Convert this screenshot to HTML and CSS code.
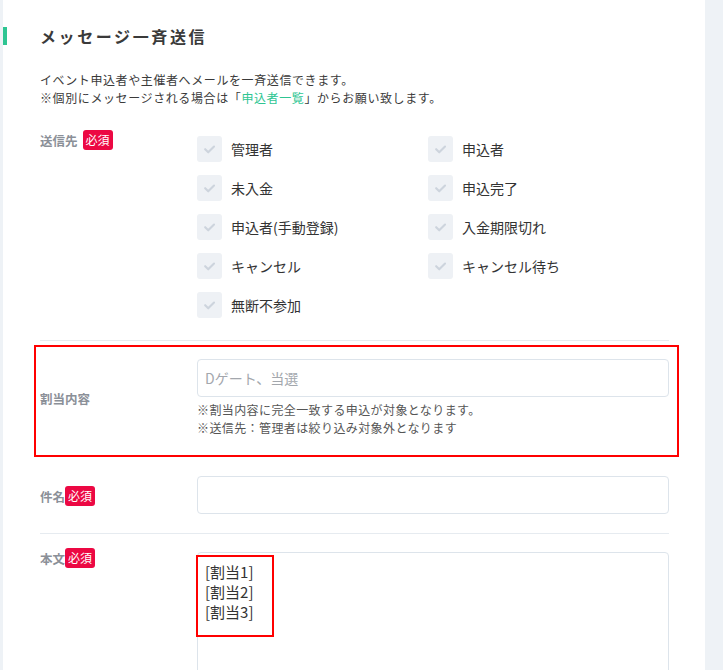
FILE: index.html
```html
<!DOCTYPE html>
<html lang="ja">
<head>
<meta charset="utf-8">
<title>メッセージ一斉送信</title>
<link rel="stylesheet" href="styles.css">
</head>
<body>
<div class="page">
  <main class="panel">
    <h2 class="title">メッセージ一斉送信</h2>
    <p class="desc">イベント申込者や主催者へメールを一斉送信できます。<br>※個別にメッセージされる場合は「<a class="link" href="#">申込者一覧</a>」からお願い致します。</p>

    <section class="row row-dest">
      <div class="label"><span class="label-text gap">送信先</span><span class="badge">必須</span></div>
      <div class="field field-checks">
        <div class="checks">
          <label class="check"><span class="box"><svg viewBox="0 0 26 26" width="26" height="26"><path d="M8.5 13.2l3.2 3.2 6-6" fill="none" stroke="#cdd4dd" stroke-width="2.2" stroke-linecap="round" stroke-linejoin="round"/></svg></span><span class="check-text">管理者</span></label>
          <label class="check"><span class="box"><svg viewBox="0 0 26 26" width="26" height="26"><path d="M8.5 13.2l3.2 3.2 6-6" fill="none" stroke="#cdd4dd" stroke-width="2.2" stroke-linecap="round" stroke-linejoin="round"/></svg></span><span class="check-text">申込者</span></label>
          <label class="check"><span class="box"><svg viewBox="0 0 26 26" width="26" height="26"><path d="M8.5 13.2l3.2 3.2 6-6" fill="none" stroke="#cdd4dd" stroke-width="2.2" stroke-linecap="round" stroke-linejoin="round"/></svg></span><span class="check-text">未入金</span></label>
          <label class="check"><span class="box"><svg viewBox="0 0 26 26" width="26" height="26"><path d="M8.5 13.2l3.2 3.2 6-6" fill="none" stroke="#cdd4dd" stroke-width="2.2" stroke-linecap="round" stroke-linejoin="round"/></svg></span><span class="check-text">申込完了</span></label>
          <label class="check"><span class="box"><svg viewBox="0 0 26 26" width="26" height="26"><path d="M8.5 13.2l3.2 3.2 6-6" fill="none" stroke="#cdd4dd" stroke-width="2.2" stroke-linecap="round" stroke-linejoin="round"/></svg></span><span class="check-text">申込者(手動登録)</span></label>
          <label class="check"><span class="box"><svg viewBox="0 0 26 26" width="26" height="26"><path d="M8.5 13.2l3.2 3.2 6-6" fill="none" stroke="#cdd4dd" stroke-width="2.2" stroke-linecap="round" stroke-linejoin="round"/></svg></span><span class="check-text">入金期限切れ</span></label>
          <label class="check"><span class="box"><svg viewBox="0 0 26 26" width="26" height="26"><path d="M8.5 13.2l3.2 3.2 6-6" fill="none" stroke="#cdd4dd" stroke-width="2.2" stroke-linecap="round" stroke-linejoin="round"/></svg></span><span class="check-text">キャンセル</span></label>
          <label class="check"><span class="box"><svg viewBox="0 0 26 26" width="26" height="26"><path d="M8.5 13.2l3.2 3.2 6-6" fill="none" stroke="#cdd4dd" stroke-width="2.2" stroke-linecap="round" stroke-linejoin="round"/></svg></span><span class="check-text">キャンセル待ち</span></label>
          <label class="check"><span class="box"><svg viewBox="0 0 26 26" width="26" height="26"><path d="M8.5 13.2l3.2 3.2 6-6" fill="none" stroke="#cdd4dd" stroke-width="2.2" stroke-linecap="round" stroke-linejoin="round"/></svg></span><span class="check-text">無断不参加</span></label>
        </div>
      </div>
    </section>

    <section class="annot">
      <div class="row row-assign">
        <div class="label label-center"><span class="label-text">割当内容</span></div>
        <div class="field">
          <div class="input placeholder">Dゲート、当選</div>
          <p class="notes">※割当内容に完全一致する申込が対象となります。<br>※送信先：管理者は絞り込み対象外となります</p>
        </div>
      </div>
    </section>

    <section class="row row-subject">
      <div class="label label-subject"><span class="label-text">件名</span><span class="badge">必須</span></div>
      <div class="field"><div class="input"></div></div>
    </section>

    <section class="row row-body">
      <div class="label label-body"><span class="label-text">本文</span><span class="badge">必須</span></div>
      <div class="field">
        <div class="textarea">
          <div class="body-line">[割当1]</div>
          <div class="body-line">[割当2]</div>
          <div class="body-line">[割当3]</div>
          <span class="mark"></span>
        </div>
      </div>
    </section>
  </main>
</div>
</body>
</html>
```

FILE: styles.css
```css
* { box-sizing: border-box; }

html, body {
  margin: 0;
  padding: 0;
  height: 100%;
}

body {
  background: #eef2f6;
  font-family: "Noto Sans CJK JP", "Noto Sans", sans-serif;
  color: #333;
}

.page {
  padding-left: 3px;
  min-height: 100%;
}

.panel {
  width: 702px;
  min-height: 670px;
  background: #fff;
  padding: 27px 36px 0 0;
}

.title {
  margin: 0;
  border-left: 4px solid #2ec592;
  padding-left: 33px;
  font-size: 16px;
  line-height: 18px;
  font-weight: 700;
  letter-spacing: 2.6px;
  color: #3a3a3a;
}

.desc {
  margin: 26px 0 0 37px;
  font-size: 12px;
  line-height: 18px;
  letter-spacing: 0.6px;
  color: #3a3a3a;
}

.link {
  color: #2ec592;
  text-decoration: none;
}

.row {
  display: grid;
  grid-template-columns: 157px 472px;
  margin-left: 37px;
}

.label {
  display: flex;
  align-items: center;
  height: 20px;
}

.label-text {
  font-size: 12.5px;
  font-weight: 700;
  color: #8b9098;
}

.label-text.gap { margin-right: 5px; }

.badge {
  display: inline-block;
  height: 20px;
  line-height: 20px;
  padding: 0 3px;
  border-radius: 3px;
  background: #ec0843;
  color: #fff;
  font-size: 12px;
}

.row-dest {
  margin-top: 23px;
  padding-bottom: 22px;
  border-bottom: 1px solid #e6ebf0;
}

.field-checks { padding-top: 6px; }

.checks {
  display: grid;
  grid-template-columns: 231px 1fr;
  row-gap: 13px;
}

.check {
  display: flex;
  align-items: center;
  height: 26px;
}

.box {
  width: 25px;
  height: 26px;
  border-radius: 3px;
  background: #eef1f5;
  display: flex;
}

.check-text {
  margin-left: 9px;
  font-size: 14px;
  color: #333;
}

.annot {
  margin: 4px -10px 0 31px;
  border: 2px solid #ff0000;
  padding: 12px 8px 18px 4px;
}

.annot .row {
  margin-left: 0;
  align-items: center;
}

.label-center { height: auto; }

.input {
  height: 38px;
  border: 1px solid #dde4eb;
  border-radius: 4px;
  background: #fff;
  padding: 0 7px;
  font-size: 14px;
  line-height: 36px;
}

.placeholder { color: #a3a7ad; }

.notes {
  margin: 4px 0 0;
  font-size: 12px;
  line-height: 18px;
  letter-spacing: 0.4px;
  color: #555;
}

.row-subject {
  margin-top: 19px;
  padding-bottom: 19px;
  border-bottom: 1px solid #e6ebf0;
}

.label-subject { margin-top: 10px; }

.row-body { padding-top: 18px; }

.label-body { margin-top: -4px; }

.textarea {
  position: relative;
  height: 200px;
  border: 1px solid #dde4eb;
  border-radius: 4px;
  padding: 9px 7px;
}

.body-line {
  font-size: 15px;
  line-height: 20px;
  color: #333;
}

.mark {
  position: absolute;
  left: -2px;
  top: 2px;
  width: 78px;
  height: 82px;
  border: 2px solid #ff0000;
}
```
